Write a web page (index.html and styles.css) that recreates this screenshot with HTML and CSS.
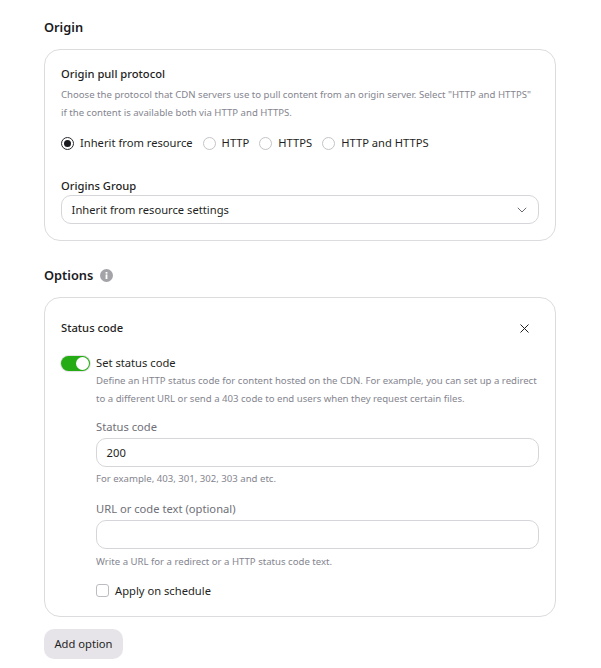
FILE: index.html
```html
<!DOCTYPE html>
<html lang="en">
<head>
    <meta charset="UTF-8">
    <meta name="viewport" content="width=device-width, initial-scale=1.0">
    <title>CDN rule</title>
    <link rel="stylesheet" href="styles.css">
</head>
<body>
    <h2 class="section-title">Origin</h2>
    <div class="card origin-card">
        <div class="field-title">Origin pull protocol</div>
        <p class="hint hint-wide">Choose the protocol that CDN servers use to pull content from an origin server. Select "HTTP and HTTPS" if the content is available both via HTTP and HTTPS.</p>
        <div class="radio-row">
            <label class="radio checked"><span class="radio-dot"></span>Inherit from resource</label>
            <label class="radio"><span class="radio-dot"></span>HTTP</label>
            <label class="radio"><span class="radio-dot"></span>HTTPS</label>
            <label class="radio"><span class="radio-dot"></span>HTTP and HTTPS</label>
        </div>
        <div class="field-title group-label">Origins Group</div>
        <div class="input select">
            <span>Inherit from resource settings</span>
            <svg width="10" height="6" viewBox="0 0 10 6" fill="none"><path d="M.8.8 5 5 9.2.8" stroke="#6b6b75" stroke-width="1"/></svg>
        </div>
    </div>

    <h2 class="section-title options-title">Options
        <svg class="info" width="13" height="13" viewBox="0 0 13 13"><circle cx="6.5" cy="6.5" r="6.5" fill="#a3a3a8"/><rect x="5.6" y="5.4" width="1.8" height="4.6" fill="#fff"/><rect x="5.6" y="3" width="1.8" height="1.7" fill="#fff"/></svg>
    </h2>
    <div class="card options-card">
        <div class="option-head">
            <div class="field-title">Status code</div>
            <svg width="9" height="9" viewBox="0 0 9 9" fill="none"><path d="M.5.5l8 8M8.5.5l-8 8" stroke="#1f1f24" stroke-width="1"/></svg>
        </div>
        <div class="toggle-row">
            <span class="toggle"><span class="toggle-knob"></span></span>
            <span>Set status code</span>
        </div>
        <div class="option-body">
            <p class="hint">Define an HTTP status code for content hosted on the CDN. For example, you can set up a redirect to a different URL or send a 403 code to end users when they request certain files.</p>
            <div class="muted-label first-label">Status code</div>
            <div class="input">200</div>
            <p class="hint small-hint">For example, 403, 301, 302, 303 and etc.</p>
            <div class="muted-label second-label">URL or code text (optional)</div>
            <div class="input"></div>
            <p class="hint last-hint">Write a URL for a redirect or a HTTP status code text.</p>
            <label class="check-row"><span class="checkbox"></span>Apply on schedule</label>
        </div>
    </div>
    <button class="add-btn">Add option</button>
</body>
</html>
```

FILE: styles.css
```css
body {
    font-family: "Noto Sans", sans-serif;
    font-size: 11.2px;
    line-height: 18px;
    color: #1f1f24;
    margin: 0;
    padding: 17px 45px 0 44px;
    background: #fff;
}
.section-title {
    font-size: 12.8px;
    font-weight: 600;
    line-height: 20px;
    margin: 0;
    color: #1a1a1f;
}
.options-title {
    display: flex;
    align-items: center;
    gap: 7px;
    margin-top: 24px;
}
.card {
    border: 1px solid #dcdcdf;
    border-radius: 16px;
    margin-top: 12px;
    box-sizing: border-box;
}
.origin-card {
    height: 192px;
    padding: 15px 16px;
}
.options-card {
    height: 320px;
    padding: 16px;
}
.field-title {
    font-weight: 500;
}
.hint {
    font-size: 9.6px;
    line-height: 18px;
    color: #85858f;
    margin: 0;
}
.hint-wide {
    margin-top: 3px;
}
.radio-row {
    display: flex;
    gap: 10px;
    margin-top: 12px;
}
.radio {
    display: flex;
    align-items: center;
    gap: 6px;
}
.radio-dot {
    width: 11px;
    height: 11px;
    border: 1px solid #c4c4c8;
    border-radius: 50%;
    position: relative;
}
.radio.checked .radio-dot {
    border-color: #2a2a30;
}
.radio.checked .radio-dot::after {
    content: "";
    position: absolute;
    top: 2px;
    left: 2px;
    width: 7px;
    height: 7px;
    border-radius: 50%;
    background: #1a1a1f;
}
.group-label {
    margin-top: 25px;
}
.input {
    height: 28.8px;
    box-sizing: border-box;
    border: 1px solid #d6d6da;
    border-radius: 10px;
    padding: 1px 9.6px 0;
    display: flex;
    align-items: center;
}
.select {
    justify-content: space-between;
    padding-right: 11px;
}
.option-head {
    display: flex;
    align-items: center;
    justify-content: space-between;
    padding-right: 10px;
    margin-top: 5px;
}
.toggle-row {
    display: flex;
    align-items: center;
    gap: 6px;
    margin-top: 17px;
}
.toggle {
    width: 29px;
    height: 15px;
    border-radius: 8px;
    background: #25ab13;
    box-shadow: 0 0 0 1px #e4e4e7;
    position: relative;
}
.toggle-knob {
    position: absolute;
    top: 1px;
    right: 1px;
    width: 13px;
    height: 13px;
    border-radius: 50%;
    background: #fff;
}
.option-body {
    padding-left: 35px;
}
.muted-label {
    color: #6f6f78;
}
.first-label {
    margin-top: 10px;
    margin-bottom: 2px;
}
.second-label {
    margin-top: 12px;
    margin-bottom: 2px;
}
.small-hint {
    margin-top: 3px;
}
.last-hint {
    margin-top: 4px;
}
.check-row {
    display: flex;
    align-items: center;
    gap: 6px;
    margin-top: 11px;
}
.checkbox {
    width: 11px;
    height: 11px;
    border: 1px solid #bcbcc2;
    border-radius: 3px;
}
.add-btn {
    display: block;
    margin-top: 12px;
    width: 79px;
    height: 30px;
    border: none;
    border-radius: 10px;
    background: #e6e4e9;
    color: #1f1f24;
    font-family: inherit;
    font-size: 11.2px;
    padding: 0 0 1px;
}
```
